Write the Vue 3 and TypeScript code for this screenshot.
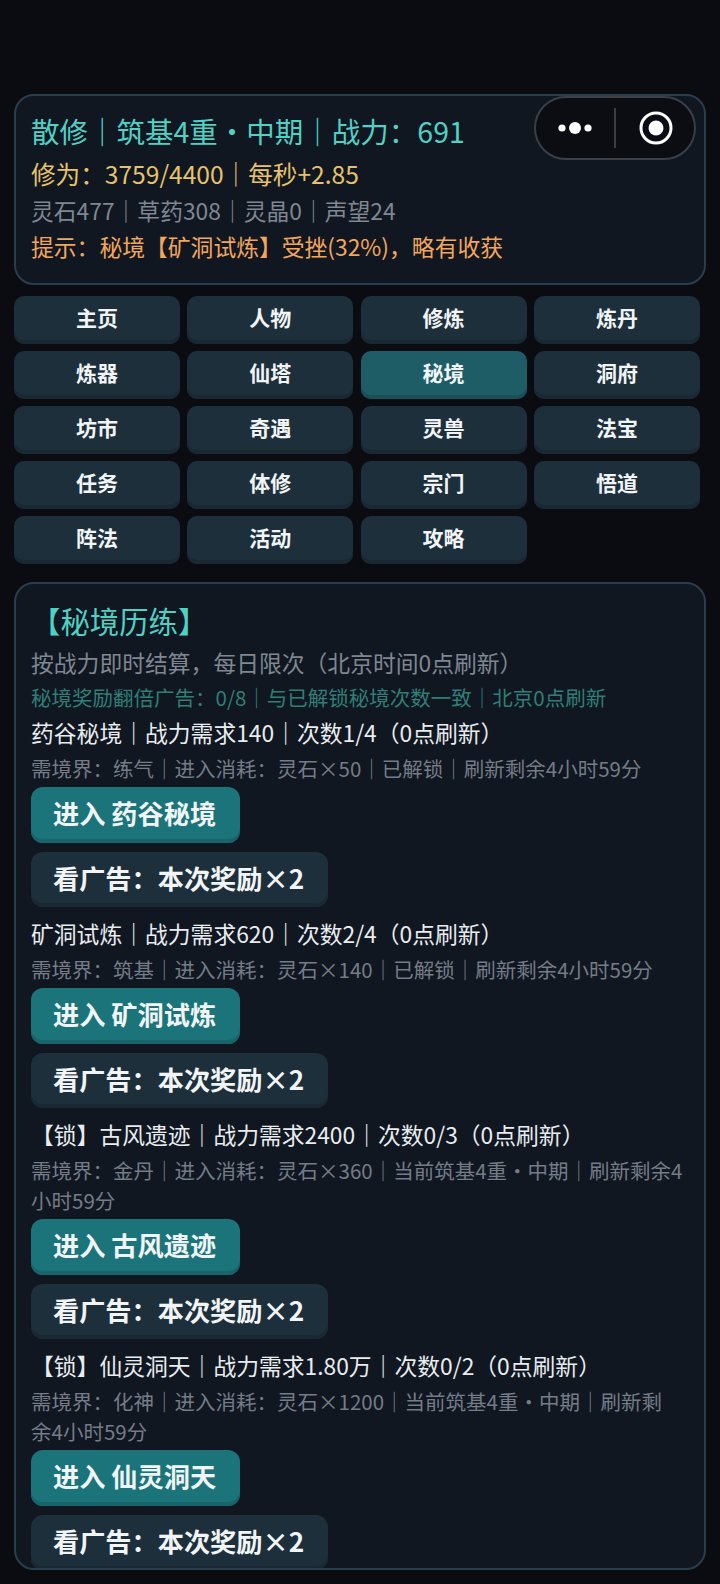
<template>
  <div class="page">
    <section class="card status">
      <div class="title">散修｜筑基4重・中期｜战力：691</div>
      <div class="cultivation">修为：3759/4400｜每秒+2.85</div>
      <div class="resources">灵石477｜草药308｜灵晶0｜声望24</div>
      <div class="hint">提示：秘境【矿洞试炼】受挫(32%)，略有收获</div>
      <div class="capsule">
        <svg class="capsule-icon" width="36" height="16" viewBox="0 0 36 16" aria-hidden="true">
          <circle cx="5" cy="8" r="3.6" fill="#fff" />
          <circle cx="18" cy="8" r="6" fill="#fff" />
          <circle cx="31" cy="8" r="3.6" fill="#fff" />
        </svg>
        <span class="capsule-line"></span>
        <svg class="capsule-icon" width="34" height="34" viewBox="0 0 34 34" aria-hidden="true">
          <circle cx="17" cy="17" r="15" fill="none" stroke="#fff" stroke-width="3" />
          <circle cx="17" cy="17" r="7.5" fill="#fff" />
        </svg>
      </div>
    </section>

    <nav class="tabs">
      <button
        v-for="tab in tabs"
        :key="tab"
        class="tab"
        :class="{ 'tab--active': tab === activeTab }"
      >
        {{ tab }}
      </button>
    </nav>

    <section class="card realms">
      <div class="realms-title">【秘境历练】</div>
      <div class="realms-sub">按战力即时结算，每日限次（北京时间0点刷新）</div>
      <div class="realms-ad">秘境奖励翻倍广告：0/8｜与已解锁秘境次数一致｜北京0点刷新</div>

      <div v-for="realm in realms" :key="realm.name" class="realm">
        <div class="realm-head">{{ realm.head }}</div>
        <div class="realm-desc">{{ realm.desc }}</div>
        <button class="action action--enter">进入 {{ realm.name }}</button>
        <button class="action action--ad">看广告：本次奖励×2</button>
      </div>
    </section>
  </div>
</template>

<script setup lang="ts">
interface Realm {
  name: string
  head: string
  desc: string
}

const activeTab = '秘境'

const tabs: string[] = [
  '主页', '人物', '修炼', '炼丹',
  '炼器', '仙塔', '秘境', '洞府',
  '坊市', '奇遇', '灵兽', '法宝',
  '任务', '体修', '宗门', '悟道',
  '阵法', '活动', '攻略',
]

const realms: Realm[] = [
  {
    name: '药谷秘境',
    head: '药谷秘境｜战力需求140｜次数1/4（0点刷新）',
    desc: '需境界：练气｜进入消耗：灵石×50｜已解锁｜刷新剩余4小时59分',
  },
  {
    name: '矿洞试炼',
    head: '矿洞试炼｜战力需求620｜次数2/4（0点刷新）',
    desc: '需境界：筑基｜进入消耗：灵石×140｜已解锁｜刷新剩余4小时59分',
  },
  {
    name: '古风遗迹',
    head: '【锁】古风遗迹｜战力需求2400｜次数0/3（0点刷新）',
    desc: '需境界：金丹｜进入消耗：灵石×360｜当前筑基4重・中期｜刷新剩余4小时59分',
  },
  {
    name: '仙灵洞天',
    head: '【锁】仙灵洞天｜战力需求1.80万｜次数0/2（0点刷新）',
    // the line wraps one character earlier here than the width alone gives
    desc: '需境界：化神｜进入消耗：灵石×1200｜当前筑基4重・中期｜刷新剩\n余4小时59分',
  },
]
</script>

<style>
html,
body {
  margin: 0;
  background: #0a0c12;
}
</style>

<style scoped>
.page {
  box-sizing: border-box;
  width: 720px;
  height: 1584px;
  padding: 94px 14px 14px;
  display: flex;
  flex-direction: column;
  overflow: hidden;
  background: #0a0c12;
  font-family: "Noto Sans CJK SC", "Noto Sans", sans-serif;
}

.card {
  position: relative;
  box-sizing: border-box;
  border: 2px solid #2a3d4c;
  border-radius: 20px;
  background: #101721;
}

.status {
  height: 191px;
  padding: 13px 15px 0;
  flex: none;
}

.title {
  font-size: 28.5px;
  line-height: 44px;
  color: #4fd1c5;
}

.cultivation {
  font-size: 24.6px;
  line-height: 40px;
  color: #e6c36a;
}

.resources {
  font-size: 22.8px;
  line-height: 35px;
  color: #7f8791;
}

.hint {
  font-size: 22.8px;
  line-height: 38px;
  color: #f2a65c;
}

.capsule {
  position: absolute;
  top: 0;
  right: 8px;
  box-sizing: border-box;
  width: 162px;
  height: 64px;
  display: flex;
  align-items: center;
  border: 2px solid #3a3f47;
  border-radius: 32px;
  background: #0b0d13;
}

.capsule-icon {
  flex: none;
}

.capsule-icon:first-child {
  margin-left: 21px;
}

.capsule-icon:last-child {
  margin-left: 23px;
}

.capsule-line {
  width: 2px;
  height: 40px;
  margin-left: 21px;
  background: #3a3f47;
}

.tabs {
  flex: none;
  display: grid;
  grid-template-columns: repeat(4, 166px);
  grid-auto-rows: 48px;
  gap: 7px 7.3px;
  margin-top: 11px;
}

.tab {
  padding: 0 0 6px;
  border: none;
  border-radius: 10px;
  background: #1e2f3c;
  box-shadow: inset 0 -4px 0 #1a2833;
  color: #f1f5f7;
  font-family: inherit;
  font-size: 21px;
  font-weight: 700;
}

.tab--active {
  background: #1e5d66;
  box-shadow: inset 0 -4px 0 #194f57;
}

.realms {
  flex: 1;
  min-height: 0;
  margin-top: 18px;
  padding: 13px 15px 0;
  overflow: hidden;
}

.realms-title {
  font-size: 29.4px;
  line-height: 46px;
  color: #4fd1c5;
}

.realms-sub {
  font-size: 22.8px;
  line-height: 34px;
  margin-top: 3px;
  color: #7f8791;
}

.realms-ad {
  font-size: 20.5px;
  line-height: 35px;
  color: #2f7f78;
}

.realm {
  padding-bottom: 9px;
}

.realm-head {
  font-size: 22.8px;
  line-height: 34px;
  margin-top: 1px;
  color: #e8ecef;
}

.realm-desc {
  font-size: 20.5px;
  line-height: 30px;
  margin-top: 3px;
  color: #747c87;
  white-space: pre-line;
}

.action {
  display: block;
  padding: 0 24px 4px 22px;
  border: none;
  border-radius: 12px;
  color: #f1f5f7;
  font-family: inherit;
  font-size: 26.2px;
  font-weight: 700;
}

.action--enter {
  height: 56px;
  margin-top: 4px;
  background: #1b747a;
  box-shadow: inset 0 -4px 0 #17646a;
}

.action--ad {
  height: 55px;
  margin-top: 9px;
  background: #1e2f3c;
  box-shadow: inset 0 -4px 0 #1a2833;
}
</style>
